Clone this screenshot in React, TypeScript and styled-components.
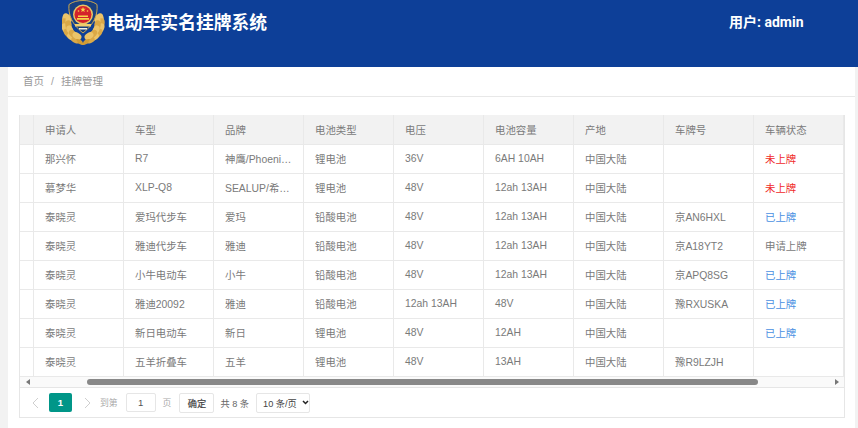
import React from "react";
import styled, { createGlobalStyle } from "styled-components";

const Global = createGlobalStyle`
  html, body { margin: 0; padding: 0; background: #f2f2f2; overflow: hidden; }
  body { font-family: "Liberation Sans", "Noto Sans CJK SC", sans-serif; }
`;
const Page = styled.div`width: 858px; height: 428px; overflow: hidden; display: flex; flex-direction: column;`;
const Header = styled.header`
  height: 67px; flex: none; background: #0d3f98; color: #fff;
  display: flex; align-items: flex-start; padding-left: 62px; box-sizing: border-box;
`;
const Emblem = styled.svg`width: 43px; height: 46px; flex: none;`;
const Title = styled.h1`
  margin: 13px 0 0 2px; font-size: 17.8px; line-height: 20px; font-weight: 700; white-space: nowrap;
`;
const User = styled.div`
  margin: 13px 0 0 auto; width: 129px; font-family: Roboto, "Noto Sans CJK SC", sans-serif;
  font-size: 14px; line-height: 18px; font-weight: 700; white-space: nowrap;
`;
const Card = styled.main`
  flex: 1; margin: 0 3px 0 8px; background: #fff; display: flex; flex-direction: column;
`;
const Crumbs = styled.nav`
  height: 30px; flex: none; box-sizing: border-box; border-bottom: 1px solid #e8e8e8;
  padding-left: 15px; display: flex; align-items: center; gap: 7px;
  font-size: 10.5px; color: #999; padding-bottom: 2px;
`;
const Sep = styled.span`color: #a0a0a0;`;
const Content = styled.section`padding: 18px 10px 0 11px;`;
const Frame = styled.div`border: 1px solid #e6e6e6; border-top: none; width: 826px; box-sizing: border-box;`;
const Grid = styled.div`
  display: grid; grid-template-columns: 14px repeat(9, 90px); grid-template-rows: 30px; grid-auto-rows: 29px;
  border-right: 1px solid #e6e6e6; width: 825px; box-sizing: border-box;
`;
const Cell = styled.div<{ $head?: boolean; $tone?: string }>`
  box-sizing: border-box; border-right: 1px solid #e9e9e9; border-bottom: 1px solid #e9e9e9;
  padding: 0 0 ${p => (p.$head ? 0 : 1)}px 11px; display: flex; align-items: center; font-size: 10.4px;
  white-space: nowrap; overflow: hidden;
  background: ${p => (p.$head ? "#f2f2f2" : "#fff")};
  color: ${p => p.$tone ?? "#7a7a7a"};
`;
const Scroll = styled.div`
  height: 10px; display: flex; align-items: center; border-bottom: 1px solid #e6e6e6; background: #fafafa;
  padding: 0 5px 0 6px; justify-content: space-between; position: relative;
`;
const Thumb = styled.div`
  position: absolute; left: 67px; top: 2px; width: 671px; height: 6px; border-radius: 3px; background: #888;
`;
const ArrowL = styled.span`width: 0; height: 0; border: 3px solid transparent; border-left: none; border-right: 4px solid #777;`;
const ArrowR = styled.span`width: 0; height: 0; border: 3px solid transparent; border-right: none; border-left: 4px solid #777;`;
const Pager = styled.div`
  height: 29px; display: flex; align-items: center; padding-left: 11px; font-size: 9.2px; color: #666;
`;
const Chevron = styled.svg`width: 10px; height: 12px; flex: none;`;
const Current = styled.span`
  width: 23px; height: 19px; margin: 0 10px 0 8px; background: #009688; color: #fff; border-radius: 2px;
  display: flex; align-items: center; justify-content: center; font-weight: 700; font-size: 9.6px;
`;
const Muted = styled.span`color: #aaa; font-size: 8.8px;`;
const ToLabel = styled(Muted)`margin-left: 8px;`;
const PageInput = styled.span`
  width: 30px; height: 19px; box-sizing: border-box; border: 1px solid #e6e6e6; border-radius: 2px; margin: 0 7px 0 8px;
  display: flex; align-items: center; justify-content: center; color: #555; font-size: 9.6px;
`;
const Confirm = styled.span`
  width: 35px; height: 20px; box-sizing: border-box; border: 1px solid #e6e6e6; border-radius: 2px; margin: 0 6px 0 8px;
  display: flex; align-items: center; justify-content: center; color: #444; font-size: 9.2px;
  -webkit-text-stroke: 0.2px #444;
`;
const Total = styled.span`white-space: nowrap;`;
const SizeSelect = styled.span`
  width: 54px; height: 20px; box-sizing: border-box; border: 1px solid #e6e6e6; border-radius: 2px; margin-left: 7px;
  display: flex; align-items: center; gap: 5px; padding-left: 6px; color: #444; white-space: nowrap; font-size: 9.2px;
`;

const RED = "#ef2a2a";
const BLUE = "#4a90e2";
const heads = ["申请人", "车型", "品牌", "电池类型", "电压", "电池容量", "产地", "车牌号", "车辆状态"];
const rows: string[][] = [
  ["那兴怀", "R7", "神鹰/Phoeni…", "锂电池", "36V", "6AH 10AH", "中国大陆", "", "未上牌"],
  ["慕梦华", "XLP-Q8", "SEALUP/希…", "锂电池", "48V", "12ah 13AH", "中国大陆", "", "未上牌"],
  ["泰晓灵", "爱玛代步车", "爱玛", "铅酸电池", "48V", "12ah 13AH", "中国大陆", "京AN6HXL", "已上牌"],
  ["泰晓灵", "雅迪代步车", "雅迪", "铅酸电池", "48V", "12ah 13AH", "中国大陆", "京A18YT2", "申请上牌"],
  ["泰晓灵", "小牛电动车", "小牛", "铅酸电池", "48V", "12ah 13AH", "中国大陆", "京APQ8SG", "已上牌"],
  ["泰晓灵", "雅迪20092", "雅迪", "铅酸电池", "12ah 13AH", "48V", "中国大陆", "豫RXUSKA", "已上牌"],
  ["泰晓灵", "新日电动车", "新日", "锂电池", "48V", "12AH", "中国大陆", "", "已上牌"],
  ["泰晓灵", "五羊折叠车", "五羊", "锂电池", "48V", "13AH", "中国大陆", "豫R9LZJH", ""],
];
const tone = (s: string) => (s === "未上牌" ? RED : s === "已上牌" ? BLUE : undefined);

const leaves: [number, number, number][] = [
  [3.5, 18, 10], [2.5, 23, -5], [3, 28, -20], [5.5, 33, -35], [9.5, 37, -55], [14, 40, -70],
  [7, 19, 20], [6.5, 25, -5], [8, 30, -25], [11, 34, -45], [15, 36, -60],
];
const Logo = () => (
  <Emblem viewBox="0 0 43 46">
    {leaves.map(([x, y, r], i) => (
      <g key={i}>
        <ellipse cx={x} cy={y} rx="3.200" ry="4.800" fill={i % 2 ? "#dba947" : "#ecc469"} transform={`rotate(${r} ${x} ${y})`} />
        <ellipse cx={42 - x} cy={y} rx="3.200" ry="4.800" fill={i % 2 ? "#dba947" : "#ecc469"} transform={`rotate(${-r} ${42 - x} ${y})`} />
      </g>
    ))}
    <path d="M14 39c4 0 6 1 7 4 1-3 3-4 7-4l-2 4c-2 1.500-3.500 2-5 2s-3-.5-5-2z" fill="#d29c35" />
    <path d="M21 .5C26 .5 31 1.500 35 4.500c1 10-3 20-14 28.500C10 24.500 6 14.500 7 4.500 11 1.500 16 .5 21 .5z" fill="#18407f" stroke="#c9a651" strokeWidth="1" />
    <circle cx="21" cy="14.500" r="10" fill="#e9c566" />
    <circle cx="21" cy="14.500" r="8.500" fill="#d4222b" />
    <path d="M21 6.800l.7 2h2.100l-1.700 1.300.7 2-1.800-1.200-1.800 1.200.7-2-1.700-1.300h2.100z" fill="#f6d54a" />
    <circle cx="16.500" cy="11" r=".8" fill="#f6d54a" />
    <circle cx="25.500" cy="11" r=".8" fill="#f6d54a" />
    <path d="M16 15.500h10v1.500H16zM15 18h12v1.800H15z" fill="#f6d54a" />
    <path d="M13 24h16v2.500H13z" fill="#f0cd6e" />
    <path d="M17 28h8v1.500h-8z" fill="#f5f0e0" />
  </Emblem>
);

const Left = () => (
  <Chevron viewBox="0 0 10 12"><path d="M7 1L2 6l5 5" fill="none" stroke="#cfcfcf" strokeWidth="1" /></Chevron>
);
const Right = () => (
  <Chevron viewBox="0 0 10 12"><path d="M3 1l5 5-5 5" fill="none" stroke="#cfcfcf" strokeWidth="1" /></Chevron>
);

export default function App() {
  return (
    <Page>
      <Global />
      <Header>
        <Logo />
        <Title>电动车实名挂牌系统</Title>
        <User>用户: admin</User>
      </Header>
      <Card>
        <Crumbs>
          <span>首页</span>
          <Sep>/</Sep>
          <span>挂牌管理</span>
        </Crumbs>
        <Content>
          <Frame>
            <Grid>
              <Cell $head />
              {heads.map(h => <Cell $head key={h}>{h}</Cell>)}
              {rows.map((r, i) => (
                <React.Fragment key={i}>
                  <Cell />
                  {r.map((c, j) => <Cell key={j} $tone={j === 8 ? tone(c) : undefined}>{c}</Cell>)}
                </React.Fragment>
              ))}
            </Grid>
            <Scroll>
              <ArrowL />
              <Thumb />
              <ArrowR />
            </Scroll>
            <Pager>
              <Left />
              <Current>1</Current>
              <Right />
              <ToLabel>到第</ToLabel>
              <PageInput>1</PageInput>
              <Muted>页</Muted>
              <Confirm>确定</Confirm>
              <Total>共 8 条</Total>
              <SizeSelect>10 条/页 <svg width="7" height="5" viewBox="0 0 7 5"><path d="M1 1l2.500 2.500L6 1" fill="none" stroke="#222" strokeWidth="1.500" /></svg></SizeSelect>
            </Pager>
          </Frame>
        </Content>
      </Card>
    </Page>
  );
}
